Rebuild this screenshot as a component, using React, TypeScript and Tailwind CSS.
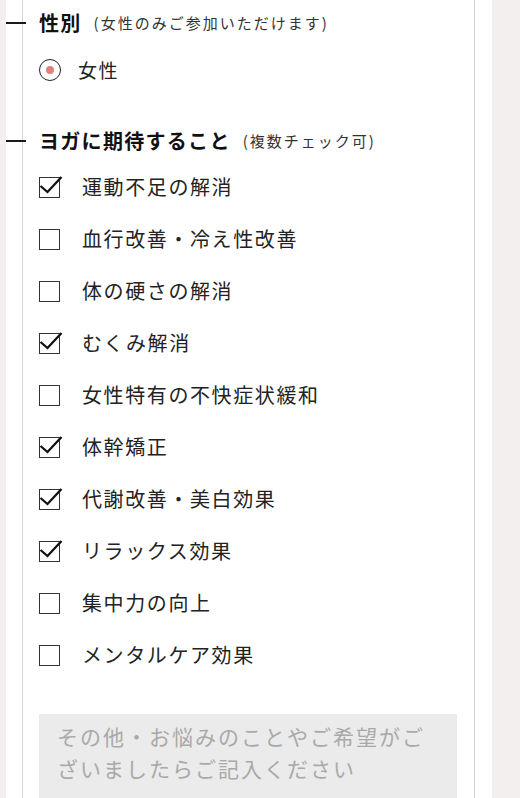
import React from "react";

const goals = [
  { label: "運動不足の解消", checked: true },
  { label: "血行改善・冷え性改善", checked: false },
  { label: "体の硬さの解消", checked: false },
  { label: "むくみ解消", checked: true },
  { label: "女性特有の不快症状緩和", checked: false },
  { label: "体幹矯正", checked: true },
  { label: "代謝改善・美白効果", checked: true },
  { label: "リラックス効果", checked: true },
  { label: "集中力の向上", checked: false },
  { label: "メンタルケア効果", checked: false },
];

function Heading({ title, note }: { title: string; note: string }) {
  return (
    <div className="relative flex items-center">
      <span className="absolute left-[-36px] top-1/2 h-[2px] w-[23px] -translate-y-1/2 bg-[#1a1a1a]" />
      <span className="text-[20px] font-bold tracking-[1.3px] text-[#111]">{title}</span>
      <span className="ml-[12px] text-[15px] tracking-[2px] text-[#333]">{note}</span>
    </div>
  );
}

function Checkbox({ checked }: { checked: boolean }) {
  return (
    <span className="relative block h-[21px] w-[21px] shrink-0 border-[1.5px] border-[#333] bg-white">
      {checked && (
        <svg
          className="absolute left-[-1.5px] top-[-1.5px] overflow-visible"
          width="21"
          height="21"
          viewBox="0 0 21 21"
        >
          <path
            d="M1.5 10 L8.5 16 L22.5 1"
            fill="none"
            stroke="#111"
            strokeWidth="2.3"
            strokeLinejoin="miter"
          />
        </svg>
      )}
    </span>
  );
}

export default function App() {
  return (
    <div className="min-h-screen w-full bg-[#f3efef] pl-[6px] font-['Noto_Sans_CJK_JP','Noto_Sans',sans-serif]">
      <div className="h-[798px] w-[486px] overflow-hidden bg-white pl-[16px] pr-[17px]">
        <div className="h-full border-x border-[#d4d4d4] pl-[16px] pr-[17px]">
          <div className="flex h-[46px] items-center">
            <Heading title="性別" note="(女性のみご参加いただけます)" />
          </div>

          <label className="mt-[2px] flex h-[44px] items-center">
            <span className="flex h-[22px] w-[22px] items-center justify-center rounded-full border-[1.5px] border-[#222]">
              <span className="h-[8px] w-[8px] rounded-full bg-[#e0817c]" />
            </span>
            <span className="ml-[17px] text-[19px] tracking-[1.5px] text-[#222]">女性</span>
          </label>

          <div className="mt-[29px] flex h-[40px] items-center">
            <Heading title="ヨガに期待すること" note="(複数チェック可)" />
          </div>

          <ul>
            {goals.map((g) => (
              <li key={g.label} className="flex h-[52px] items-center">
                <Checkbox checked={g.checked} />
                <span className="ml-[22px] text-[20px] tracking-[1.6px] text-[#222]">{g.label}</span>
              </li>
            ))}
          </ul>

          <textarea
            className="mt-[33px] block h-[100px] w-full resize-none bg-[#ebebeb] pl-[18px] pr-[14px] pt-[6px] text-[21px] leading-[32px] tracking-[2px] text-[#333] outline-none placeholder:text-[#a9a9a9]"
            placeholder="その他・お悩みのことやご希望がございましたらご記入ください"
          />
        </div>
      </div>
    </div>
  );
}
